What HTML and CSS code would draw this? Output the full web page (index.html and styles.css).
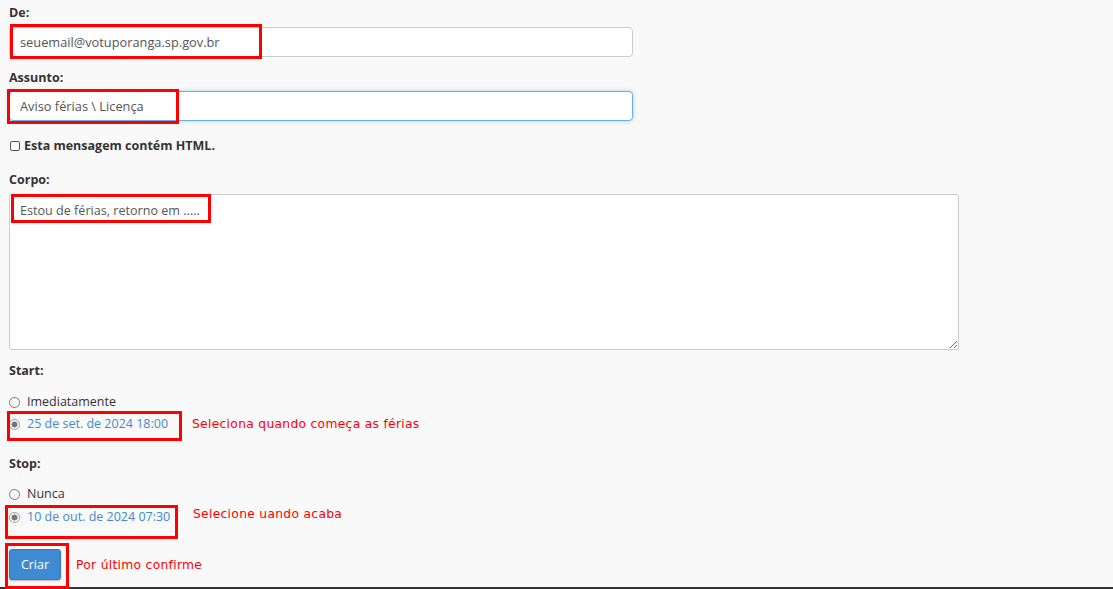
FILE: index.html
```html
<!DOCTYPE html>
<html lang="pt-BR">
<head>
    <meta charset="UTF-8">
    <title>Autoresponder</title>
    <link rel="stylesheet" href="styles.css">
</head>
<body>
    <form class="responder-form">
        <div class="group group-first">
            <label class="field-label">De:</label>
            <div class="mark-wrap">
                <input class="text-input" type="text" value="seuemail@votuporanga.sp.gov.br">
                <span class="mark mark-from"></span>
            </div>
        </div>
        <div class="group group-subject">
            <label class="field-label">Assunto:</label>
            <div class="mark-wrap">
                <input class="text-input focused" type="text" value="Aviso férias \ Licença">
                <span class="mark mark-subject"></span>
            </div>
        </div>
        <div class="check-row">
            <input class="check" type="checkbox">
            <label class="field-label">Esta mensagem contém HTML.</label>
        </div>
        <div class="group group-body">
            <label class="field-label">Corpo:</label>
            <div class="mark-wrap">
                <textarea class="body-input">Estou de férias, retorno em .....</textarea>
                <span class="mark mark-body"></span>
            </div>
        </div>

        <label class="field-label section-start">Start:</label>
        <div class="radio-row first-radio">
            <input class="radio" type="radio" name="start">
            <span class="radio-text">Imediatamente</span>
        </div>
        <div class="radio-row mark-wrap start-date">
            <input class="radio" type="radio" name="start" checked>
            <a class="date-link" href="#">25 de set. de 2024 18:00</a>
            <span class="mark mark-start"></span>
            <span class="note note-start">Seleciona quando começa as férias</span>
        </div>

        <label class="field-label section-stop">Stop:</label>
        <div class="radio-row first-radio stop-first">
            <input class="radio" type="radio" name="stop">
            <span class="radio-text">Nunca</span>
        </div>
        <div class="radio-row mark-wrap stop-date">
            <input class="radio" type="radio" name="stop" checked>
            <a class="date-link" href="#">10 de out. de 2024 07:30</a>
            <span class="mark mark-stop"></span>
            <span class="note note-stop">Selecione uando acaba</span>
        </div>

        <div class="mark-wrap submit-wrap">
            <button class="btn-primary" type="button">Criar</button>
            <span class="mark mark-submit"></span>
            <span class="note note-submit">Por último confirme</span>
        </div>
    </form>
    <div class="bottom-bar"></div>
</body>
</html>
```

FILE: styles.css
```css
body {
    margin: 0;
    padding: 0;
    background: #f9f9f9;
    font-family: 'Open Sans', sans-serif;
    font-size: 12.5px;
    color: #333;
    overflow: hidden;
}
.responder-form {
    padding: 4px 9px 0;
}
.field-label {
    display: block;
    font-weight: bold;
    line-height: 18px;
    height: 18px;
}
.group-subject {
    margin-top: 12px;
}
.group-body {
    margin-top: 16px;
}
.mark-wrap {
    position: relative;
}
.group .mark-wrap {
    margin-top: 5px;
}
.group-subject .mark-wrap {
    margin-top: 4px;
}
.text-input {
    display: block;
    box-sizing: border-box;
    width: 624px;
    height: 30px;
    margin: 0;
    padding: 0 10px;
    border: 1px solid #ccc;
    border-radius: 4px;
    background: #fff;
    font-family: 'Open Sans', sans-serif;
    font-size: 12.8px;
    color: #555;
    outline: none;
}
.text-input.focused {
    border-color: #66afe9;
    box-shadow: 0 0 4px rgba(102, 175, 233, 0.5);
}
.body-input {
    display: block;
    box-sizing: border-box;
    width: 950px;
    height: 156px;
    margin: 0;
    padding: 7px 10px;
    border: 1px solid #ccc;
    border-radius: 2px;
    background: #fff;
    font-family: 'Open Sans', sans-serif;
    font-size: 12.6px;
    color: #555;
    outline: none;
}
.check-row {
    display: flex;
    align-items: center;
    margin-top: 16px;
    height: 18px;
}
.check {
    appearance: none;
    width: 10px;
    height: 10px;
    margin: 0 4px 0 1px;
    border: 1px solid #555;
    border-radius: 2px;
    background: #fff;
}
.section-start {
    margin-top: 12px;
}
.section-stop {
    margin-top: 23px;
}
.radio-row {
    display: flex;
    align-items: center;
    height: 18px;
}
.first-radio {
    margin-top: 12px;
}
.stop-first {
    margin-top: 11px;
}
.start-date {
    margin-top: 4px;
}
.stop-date {
    margin-top: 5px;
}
.radio {
    appearance: none;
    box-sizing: border-box;
    width: 11px;
    height: 11px;
    margin: 3px 7px 0 0;
    border: 1px solid #777;
    border-radius: 50%;
    background: #fff;
}
.radio:checked {
    background: radial-gradient(circle, #777 0, #777 2.6px, #fff 3.4px);
    border-color: #999;
}
.radio-text {
    color: #333;
}
.date-link {
    color: #428bca;
    text-decoration: none;
}
.submit-wrap {
    margin-top: 24px;
    height: 31px;
}
.btn-primary {
    display: block;
    box-sizing: border-box;
    width: 52px;
    height: 31px;
    padding: 0;
    border: 1px solid #357ebd;
    border-radius: 3px;
    background: #3f8bd1;
    color: #fff;
    font-family: 'Open Sans', sans-serif;
    font-size: 12.5px;
    box-shadow: 0 1px 2px rgba(0, 0, 0, 0.25);
}
.bottom-bar {
    margin-top: 7px;
    height: 2px;
    background: #333;
}

/* red annotation boxes drawn on top of the form */
.mark {
    position: absolute;
    box-sizing: border-box;
    border: 3px solid #f00;
    pointer-events: none;
}
.mark-from {
    left: 1px;
    top: -3px;
    width: 252px;
    height: 35px;
}
.mark-subject {
    left: -2px;
    top: -2px;
    width: 172px;
    height: 35px;
}
.mark-body {
    left: 2px;
    top: 0;
    width: 200px;
    height: 29px;
}
.mark-start {
    left: -2px;
    top: -3px;
    width: 175px;
    height: 30px;
}
.mark-stop {
    left: -4px;
    top: -2px;
    width: 173px;
    height: 34px;
}
.mark-submit {
    left: -4px;
    top: -6px;
    width: 64px;
    height: 46px;
}
.note {
    position: absolute;
    font-family: 'DejaVu Sans', sans-serif;
    font-size: 12.3px;
    letter-spacing: 0.3px;
    color: #f00;
    white-space: nowrap;
    line-height: 18px;
}
.note-start {
    left: 183px;
    top: 1px;
}
.note-stop {
    left: 184px;
    top: -2px;
}
.note-submit {
    left: 67px;
    top: 7px;
}
```
